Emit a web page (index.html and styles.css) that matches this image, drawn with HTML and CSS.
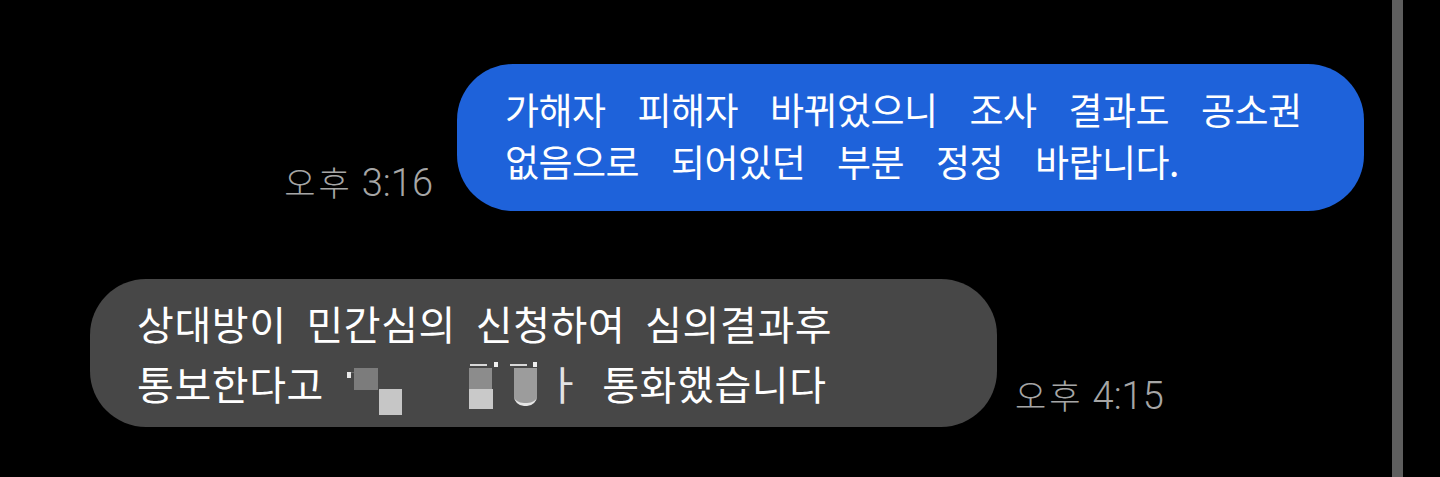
FILE: index.html
```html
<!DOCTYPE html>
<html lang="ko">
<head>
<meta charset="utf-8">
<title>Chat</title>
<link rel="stylesheet" href="styles.css">
</head>
<body>
<div class="screen">
  <main class="chat">
    <div class="row row-out">
      <div class="time time-out"><span class="ampm">오후</span><span class="clock">3:16</span></div>
      <div class="bubble bubble-out">가해자 피해자 바뀌었으니 조사 결과도 공소권<br>없음으로 되어있던 부분 정정 바랍니다.</div>
    </div>
    <div class="row row-in">
      <div class="bubble bubble-in">상대방이 민간심의 신청하여 심의결과후<br>통보한다고<span class="redact"><span class="px px-tick"></span><span class="px px-dash1"></span><span class="px px-b1"></span><span class="px px-b2"></span><span class="px px-line3"></span><span class="px px-sq3"></span><span class="px px-b3a"></span><span class="px px-b3b"></span><span class="px px-line4"></span><span class="px px-sq4"></span><span class="px px-b4"></span></span><span class="dim">ㅏ</span> 통화했습니다</div>
      <div class="time time-in"><span class="ampm">오후</span><span class="clock">4:15</span></div>
    </div>
  </main>
  <div class="scrollbar"></div>
  <div class="gutter"></div>
</div>
</body>
</html>
```
FILE: styles.css
```css
html, body {
  margin: 0;
  height: 100%;
  background: #000;
  overflow: hidden;
}

.screen {
  display: flex;
  height: 477px;
}

.chat {
  flex: 0 0 1392px;
  display: flex;
  flex-direction: column;
  padding-top: 64px;
  gap: 68px;
}

.scrollbar {
  flex: 0 0 11px;
  background: #5e5e5e;
}

.gutter {
  flex: 1;
}

.row {
  display: flex;
  align-items: flex-end;
}

.row-out {
  justify-content: flex-end;
  padding-right: 28px;
  gap: 24px;
}

.row-in {
  padding-left: 90px;
  gap: 18px;
}

.bubble {
  box-sizing: border-box;
  width: 907px;
  color: #fff;
  font-family: "Noto Sans CJK KR", sans-serif;
  white-space: nowrap;
  border-radius: 56px;
}

.bubble-out {
  background: #1e62da;
  height: 147px;
  padding: 19px 48px 22px;
  font-size: 37px;
  line-height: 52px;
  letter-spacing: -0.5px;
  word-spacing: 22px;
}

.bubble-in {
  background: #474747;
  height: 148px;
  padding: 14px 47px;
  font-size: 40px;
  line-height: 60px;
  letter-spacing: 0.6px;
  word-spacing: 8px;
}

.dim {
  opacity: 0.85;
}

.redact {
  position: relative;
  display: inline-block;
  width: 221px;
  height: 60px;
  vertical-align: top;
}

.px {
  position: absolute;
  display: block;
}

.px-tick { left: 23px; top: 19px; width: 4px; height: 6px; background: #e8e8e8; }
.px-dash1 { left: 27px; top: 19px; width: 12px; height: 1px; background: #6a6a6a; }
.px-b1 { left: 30px; top: 15px; width: 24px; height: 22px; background: #7c7c7c; }
.px-b2 { left: 55px; top: 36px; width: 23px; height: 26px; background: #c6c6c6; }
.px-line3 { left: 146px; top: 11px; width: 17px; height: 2px; background: #d8d8d8; }
.px-sq3 { left: 170px; top: 9px; width: 4px; height: 5px; background: #f0f0f0; }
.px-b3a { left: 145px; top: 15px; width: 23px; height: 21px; background: #8c8c8c; }
.px-b3b { left: 145px; top: 36px; width: 24px; height: 20px; background: #c9c9c9; }
.px-line4 { left: 186px; top: 11px; width: 17px; height: 2px; background: #d8d8d8; }
.px-sq4 { left: 209px; top: 9px; width: 4px; height: 5px; background: #f0f0f0; }
.px-b4 { left: 190px; top: 15px; width: 23px; height: 38px; background: #9c9c9c; border-radius: 0 0 10px 10px; border-bottom: 3px solid #e6e6e6; box-sizing: border-box; }

.time {
  display: flex;
  align-items: baseline;
  color: #a6a6a6;
  font-family: "Noto Sans CJK KR", sans-serif;
  font-weight: 300;
  font-size: 34px;
  line-height: 30px;
  white-space: nowrap;
}

.time-out {
  margin-bottom: 13px;
}

.time-in {
  margin-bottom: 16px;
}

.ampm {
  letter-spacing: 3px;
  margin-right: 9px;
}

.clock {
  font-family: Roboto, "Noto Sans CJK KR", sans-serif;
  font-weight: 300;
  font-size: 38px;
  line-height: 30px;
}
```
